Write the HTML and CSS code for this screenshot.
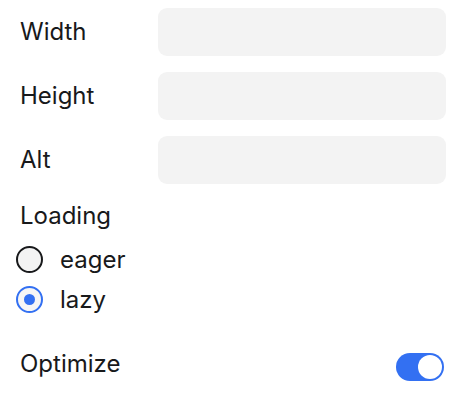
FILE: index.html
```html
<!DOCTYPE html>
<html lang="en">
<head>
<meta charset="utf-8">
<link rel="stylesheet" href="styles.css">
</head>
<body>
<form class="panel">
  <div class="fields">
    <label class="label" for="w">Width</label>
    <input class="input" id="w" type="text">
    <label class="label" for="h">Height</label>
    <input class="input" id="h" type="text">
    <label class="label" for="a">Alt</label>
    <input class="input" id="a" type="text">
  </div>
  <div class="group">
    <div class="label group-title">Loading</div>
    <label class="radio-row">
      <span class="radio"></span>
      <span class="radio-text">eager</span>
    </label>
    <label class="radio-row">
      <span class="radio checked"><span class="dot"></span></span>
      <span class="radio-text">lazy</span>
    </label>
  </div>
  <div class="switch-row">
    <span class="label switch-label">Optimize</span>
    <span class="switch on"><span class="knob"></span></span>
  </div>
</form>
</body>
</html>
```
FILE: styles.css
```css
* { box-sizing: border-box; }
html, body { margin: 0; background: #ffffff; }
body {
  font-family: Inter, "Noto Sans", sans-serif;
  font-size: 24px;
  color: #18191b;
  width: 464px;
  height: 406px;
  overflow: hidden;
}
.panel {
  padding: 8px 18px 0 16px;
}
.fields {
  display: grid;
  grid-template-columns: 142px 288px;
  row-gap: 16px;
  align-items: center;
}
.label {
  padding-left: 4px;
  line-height: 24px;
}
.input {
  height: 48px;
  border: none;
  border-radius: 9px;
  background: #f3f3f3;
  font: inherit;
  outline: none;
}
.group {
  margin-top: 20px;
  display: flex;
  flex-direction: column;
}
.group-title { margin-bottom: 18px; }
.radio-row {
  display: flex;
  align-items: center;
  gap: 17px;
  height: 27px;
  margin-bottom: 13px;
}
.radio {
  width: 27px;
  height: 27px;
  border-radius: 50%;
  border: 2px solid #18191b;
  background: #f3f3f3;
  display: flex;
  align-items: center;
  justify-content: center;
}
.radio.checked {
  border-color: #3370f2;
  background: #f6f6f6;
}
.dot {
  width: 11px;
  height: 11px;
  border-radius: 50%;
  background: #3370f2;
}
.radio-text { line-height: 24px; }
.switch-row {
  margin-top: 27px;
  display: flex;
  align-items: flex-start;
  justify-content: space-between;
  padding-right: 2px;
}
.switch-label { line-height: 22px; }
.switch {
  width: 48px;
  height: 28px;
  border-radius: 14px;
  background: #3370f2;
  display: flex;
  align-items: center;
  justify-content: flex-end;
  padding: 2px;
}
.knob {
  width: 24px;
  height: 24px;
  border-radius: 50%;
  background: #ffffff;
}
```
